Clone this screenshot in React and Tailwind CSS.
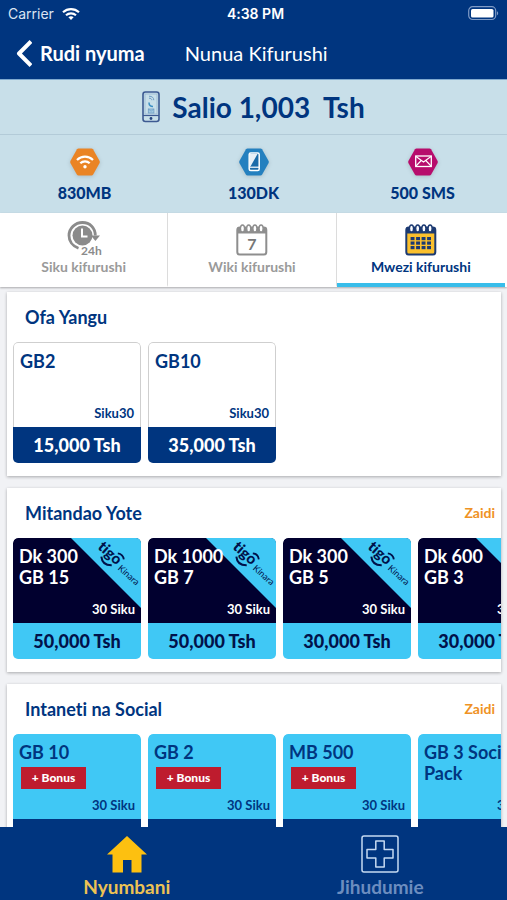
import React from "react";

function StatusBar() {
  return (
    <div className="grid h-7 grid-cols-3 items-center px-2 font-['Inter',sans-serif] text-sm text-[#dbe4f2]">
      <div className="flex items-center gap-2">
        <span>Carrier</span>
        <svg className="h-3 w-[18px]" viewBox="0 0 18 12" fill="none" stroke="#fff" strokeWidth="2.2" aria-hidden="true">
          <path d="M1 4.2C5.6 0.1 12.4 0.1 17 4.2" />
          <path d="M4 7.3C6.8 4.8 11.2 4.8 14 7.3" />
          <path d="M6.4 9.2C7.9 7.9 10.1 7.9 11.6 9.2L9 12Z" fill="#fff" stroke="none" />
        </svg>
      </div>
      <span className="pl-1 text-center font-semibold text-white">4:38 PM</span>
      <svg className="h-4 w-8 justify-self-end" viewBox="0 0 32 16" aria-hidden="true">
        <rect x="1.7" y="0.7" width="27" height="12.8" rx="4" fill="none" stroke="#7f9bc6" strokeWidth="1.2" />
        <rect x="4" y="2.9" width="22.5" height="8.6" rx="1.6" fill="#fff" />
        <path d="M30 5.2c1.600.6 1.600 3.400 0 4z" fill="#7f9bc6" />
      </svg>
    </div>
  );
}

function Header() {
  return (
    <header className="bg-[#00357f] text-white">
      <StatusBar />
      <div className="flex h-[51px] items-center pb-px pl-4">
        <button type="button" className="flex items-center gap-2 text-xl font-bold leading-6">
          <svg className="h-[27px] w-4" viewBox="0 0 16 27" fill="none" stroke="#fff" strokeWidth="4" strokeLinejoin="round" aria-hidden="true">
            <path d="M15 1.5L3 13.5L15 25.5" />
          </svg>
          Rudi nyuma
        </button>
        <h1 className="ml-10 text-xl leading-6">Nunua Kifurushi</h1>
      </div>
    </header>
  );
}

function PhoneIcon() {
  return (
    <svg className="h-8 w-[18px]" viewBox="0 0 18 32" fill="none" aria-hidden="true">
      <rect x="1" y="1" width="16" height="29.5" rx="2.4" stroke="#3d5a92" strokeWidth="1.6" />
      <path d="M1 24.5H17" stroke="#3d5a92" strokeWidth="1.2" />
      <rect x="3" y="3" width="12" height="20" stroke="#93b3cf" strokeWidth="0.7" />
      <circle cx="9" cy="27.5" r="1.4" fill="#26457f" />
      <path d="M7 5.2c3 0 4.800 1.500 4.800 4M7 7.200c1.800 0 2.800.8 2.800 2" stroke="#6f9cc4" strokeWidth="1" />
      <path d="M7 11.500c0 2.500 1.500 4 4 4" stroke="#3b8fc4" strokeWidth="1.500" />
      <rect x="6.300" y="18" width="5.600" height="4" fill="#a3cbe2" stroke="#6f9cc4" strokeWidth="0.8" />
      <path d="M6.300 18l2.800 2.200 2.800-2.200" stroke="#6f9cc4" strokeWidth="0.7" />
    </svg>
  );
}

function Hexagon({ color, children }) {
  return (
    <svg className="h-[30px] w-8 drop-shadow-sm" viewBox="0 0 32 30" fill="none" aria-hidden="true">
      <path d="M9.500 1.500H22.500Q23.500 1.500 24 2.300L30.600 14Q31 15 30.600 16L24 27.700Q23.500 28.500 22.500 28.500H9.500Q8.500 28.500 8 27.700L1.400 16Q1 15 1.400 14L8 2.300Q8.500 1.500 9.500 1.500Z" fill={color} />
      {children}
    </svg>
  );
}

function Balance({ value, color, children }) {
  return (
    <li className="flex flex-col items-center pt-3">
      <Hexagon color={color}>{children}</Hexagon>
      <span className="mt-1 text-base font-black leading-6">{value}</span>
    </li>
  );
}

function Balances() {
  return (
    <section className="bg-[#c8dfe9] text-[#00357f]">
      <div className="flex h-14 items-center justify-center gap-3 border-b border-t border-b-[#b3cbd8] border-t-[#7fa9cf]">
        <PhoneIcon />
        <p className="whitespace-pre text-[28px] font-bold leading-9">Salio 1,003  Tsh</p>
      </div>
      <ul className="grid h-[78px] grid-cols-3">
        <Balance value="830MB" color="#ea8424">
          <g stroke="#fff" strokeWidth="2.200">
            <path d="M8 13C12.500 8.500 19.500 8.500 24 13" />
            <path d="M11.300 16.300C14 13.600 18 13.600 20.700 16.300" />
          </g>
          <circle cx="16" cy="19.700" r="1.700" fill="#fff" />
        </Balance>
        <Balance value="130DK" color="#2480bf">
          <rect x="11.200" y="6" width="10" height="17.500" rx="1.500" fill="#1a6ba9" stroke="#fff" strokeWidth="1.500" />
          <path d="M12 7H19.500L12.500 19.500H12Z" fill="#fff" opacity="0.9" />
          <path d="M11.500 20.200H21" stroke="#fff" strokeWidth="1.200" />
        </Balance>
        <Balance value="500 SMS" color="#b70c6c">
          <rect x="8.700" y="9" width="15.600" height="10.500" stroke="#fff" strokeWidth="1.300" />
          <path d="M9 9.500L16.500 15L24 9.500M9 19L14.200 13.500M24 19L18.800 13.500" stroke="#fff" strokeWidth="1.100" />
        </Balance>
      </ul>
    </section>
  );
}

function DayIcon() {
  return (
    <svg className="h-10 w-9" viewBox="0 0 36 40" fill="none" aria-hidden="true">
      <path d="M12.500 31.200C6.200 29 3 23.800 3 18.500C3 11.500 9 5.500 16.500 5.500C24 5.500 29.300 11 29.300 18.500" stroke="#8b8b8b" strokeWidth="2.800" />
      <circle cx="16.500" cy="18.500" r="10" fill="#8b8b8b" />
      <path d="M24.800 18.500H34L29.400 24Z" fill="#8b8b8b" />
      <path d="M16 11.500V19.500H21.500" stroke="#fff" strokeWidth="2" />
      <text x="15" y="38" fill="#8b8b8b" fontFamily="Lato, sans-serif" fontSize="12" fontWeight="700">24h</text>
    </svg>
  );
}

function CalendarIcon({ color, fill, children }) {
  return (
    <svg className="h-10 w-9" viewBox="0 0 36 40" fill="none" aria-hidden="true">
      <rect x="3.300" y="10.500" width="29" height="27" rx="2.500" fill={fill} stroke={color} strokeWidth="2" />
      <path d="M3 10.500H32.500V16.500H3Z" fill={color} />
      {[8.5, 14.7, 20.9, 27.1].map((x) => (
        <ellipse key={x} cx={x} cy="11.500" rx="2" ry="3.500" fill="#fff" stroke={color} strokeWidth="1.300" />
      ))}
      {children}
    </svg>
  );
}

const gridRows = [20, 24.5, 29];
const gridColumns = [7.6, 13.1, 18.6, 24.1];

function Tab({ label, active, children }) {
  return (
    <button
      type="button"
      role="tab"
      aria-selected={active}
      className={
        active
          ? "flex flex-col items-center border-b-4 border-[#38bdea] pt-1 font-bold text-[#00357f]"
          : "flex flex-col items-center border-b-2 border-r border-b-white border-r-[#dcdcdc] pt-1 font-bold text-[#9a9a9a]"
      }
    >
      {children}
      <span className="text-sm leading-5">{label}</span>
    </button>
  );
}

function Tabs() {
  return (
    <div role="tablist" className="grid h-[74px] grid-cols-3 bg-white pr-0.5 shadow-[0_1px_2px_rgba(0,0,0,0.3)]">
      <Tab label="Siku kifurushi" active={false}>
        <DayIcon />
      </Tab>
      <Tab label="Wiki kifurushi" active={false}>
        <CalendarIcon color="#8e8e8e" fill="#fff">
          <text x="17.800" y="33" textAnchor="middle" fill="#777" fontFamily="Lato, sans-serif" fontSize="16" fontWeight="700">7</text>
        </CalendarIcon>
      </Tab>
      <Tab label="Mwezi kifurushi" active={true}>
        <CalendarIcon color="#1c3a72" fill="#fbc02d">
          {gridRows.map((y) =>
            gridColumns.map((x) => <rect key={x + "-" + y} x={x} y={y} width="3.900" height="3.200" fill="#1c3a72" />)
          )}
        </CalendarIcon>
      </Tab>
    </div>
  );
}

function KinaraRibbon() {
  return (
    <svg className="absolute right-0 top-0 h-[70px] w-[70px]" viewBox="0 0 70 70" role="img" aria-label="tigo Kinara">
      <path d="M0 0H70V70Z" fill="#40c8f5" />
      <g transform="translate(26 10) rotate(42)" fill="#00124a" fontFamily="Lato, sans-serif">
        <text x="0" y="0" fontSize="15" fontWeight="900">tigo</text>
        <path d="M19 -10Q23.500 -13 27.500 -9.500" fill="none" stroke="#00124a" strokeWidth="1.800" />
        <path d="M9 3.500Q15.500 9.500 22.500 3" fill="none" stroke="#00124a" strokeWidth="2" />
        <text x="29" y="2" fontSize="9">Kinara</text>
      </g>
    </svg>
  );
}

const themes = {
  plain: {
    body: "border-x border-t border-[#cfcfcf] bg-white text-[#00357f]",
    price: "bg-[#00357f] text-white",
  },
  kinara: {
    body: "bg-[#01002f] text-white",
    price: "bg-[#40c8f5] text-[#01124a]",
  },
  social: {
    body: "bg-[#40c8f5] text-[#00357f]",
    price: "bg-[#00357f] text-white",
  },
};

function OfferCard({ theme, lines, bonus, period, price }) {
  const style = themes[theme];
  return (
    <button type="button" className="w-32 shrink-0 overflow-hidden rounded-[5px] text-left">
      <div className={"relative flex h-[85px] flex-col rounded-t-[5px] px-1.5 pb-1 pt-2 " + style.body}>
        {theme === "kinara" && <KinaraRibbon />}
        {lines.map((line) => (
          <span key={line} className="relative whitespace-pre text-lg font-bold leading-[21px]">
            {line}
          </span>
        ))}
        {bonus && (
          <span className="ml-0.5 mt-1 w-[65px] bg-[#be1c2e] text-center text-xs font-black leading-[22px] text-white">+ Bonus</span>
        )}
        <span className="relative mt-auto text-right text-[13px] font-bold leading-5">{period}</span>
      </div>
      <div className={"h-9 text-center text-lg font-black leading-9 " + style.price}>{price}</div>
    </button>
  );
}

function OfferSection({ title, more, theme, offers }) {
  return (
    <section className="bg-white pb-[13px] shadow-[0_1px_3px_rgba(0,0,0,0.3)]">
      <div className="flex h-[50px] items-center justify-between pl-[18px] pr-1.5">
        <h2 className="text-lg font-bold leading-6 text-[#00357f]">{title}</h2>
        {more && (
          <a href="#zaidi" className="text-sm font-bold leading-5 text-[#ef9224]">
            Zaidi
          </a>
        )}
      </div>
      <div className="flex gap-[7px] overflow-x-auto pl-1.5 [scrollbar-width:none]">
        {offers.map((offer, index) => (
          <OfferCard key={index} theme={theme} {...offer} />
        ))}
      </div>
    </section>
  );
}

const sections = [
  {
    title: "Ofa Yangu",
    more: false,
    theme: "plain",
    offers: [
      { lines: ["GB2"], period: "Siku30", price: "15,000 Tsh" },
      { lines: ["GB10"], period: "Siku30", price: "35,000 Tsh" },
    ],
  },
  {
    title: "Mitandao Yote",
    more: true,
    theme: "kinara",
    offers: [
      { lines: ["Dk 300", "GB 15"], period: "30 Siku", price: "50,000 Tsh" },
      { lines: ["Dk 1000", "GB 7"], period: "30 Siku", price: "50,000 Tsh" },
      { lines: ["Dk 300", "GB 5"], period: "30 Siku", price: "30,000 Tsh" },
      { lines: ["Dk 600", "GB 3"], period: "30 Siku", price: "30,000 Tsh" },
    ],
  },
  {
    title: "Intaneti na Social",
    more: true,
    theme: "social",
    offers: [
      { lines: ["GB 10"], bonus: true, period: "30 Siku", price: "" },
      { lines: ["GB 2"], bonus: true, period: "30 Siku", price: "" },
      { lines: ["MB 500"], bonus: true, period: "30 Siku", price: "" },
      { lines: ["GB 3 Social", "Pack"], period: "30 Siku", price: "" },
    ],
  },
];

function BottomNav() {
  return (
    <nav className="grid h-[73px] shrink-0 grid-cols-2 bg-[#00357f] text-[19px] font-bold leading-6">
      <a href="#nyumbani" className="flex flex-col items-center pt-2 text-[#edc254]">
        <svg className="h-10 w-[42px]" viewBox="0 0 42 40" aria-hidden="true">
          <path d="M21 1L41 19.500H35.500V37.500H25.500V25H17V37.500H6.500V19.500H1Z" fill="#fdc010" />
        </svg>
        Nyumbani
      </a>
      <a href="#jihudumie" className="flex flex-col items-center pt-2 text-[#6c8dbf]">
        <svg className="h-10 w-[42px]" viewBox="0 0 42 40" fill="none" stroke="#c5daf2" strokeWidth="1.500" strokeLinejoin="round" aria-hidden="true">
          <rect x="3" y="1" width="36" height="36" rx="2" />
          <path d="M16.800 6H25.200V14.500H34V23H25.200V32H16.800V23H8V14.500H16.800Z" />
        </svg>
        Jihudumie
      </a>
    </nav>
  );
}

export default function App() {
  return (
    <div className="flex h-screen flex-col bg-[#f1f2f5] font-['Lato','Noto_Sans',sans-serif] [font-variant-ligatures:none]">
      <Header />
      <Balances />
      <Tabs />
      <main className="flex min-h-0 flex-1 flex-col gap-3 overflow-y-auto pl-[7px] pr-1.5 pt-[5px] [scrollbar-width:none]">
        {sections.map((section) => (
          <OfferSection key={section.title} {...section} />
        ))}
      </main>
      <BottomNav />
    </div>
  );
}
